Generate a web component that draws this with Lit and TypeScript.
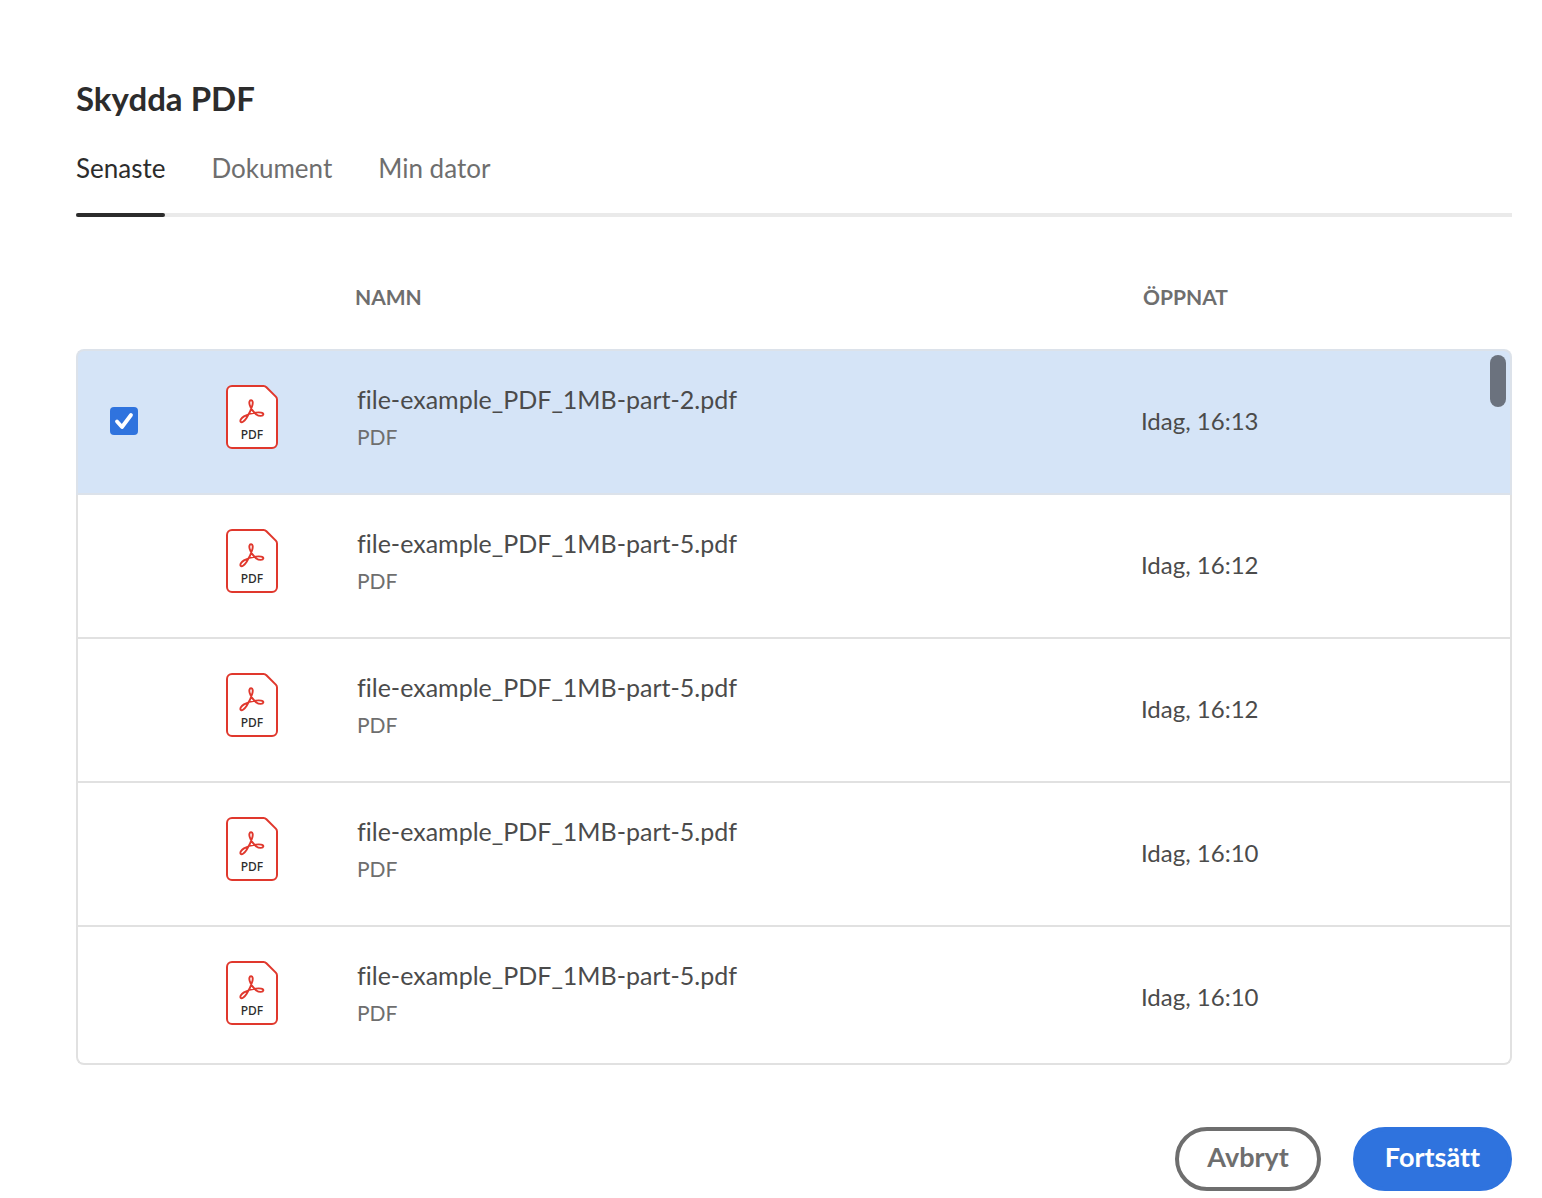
import { LitElement, html, css, svg } from "lit";
import { customElement, property, state } from "lit/decorators.js";
import { classMap } from "lit/directives/class-map.js";

interface RecentFile {
  name: string;
  opened: string;
}

const TABS = ["Senaste", "Dokument", "Min dator"];

const FILES: RecentFile[] = [
  { name: "file-example_PDF_1MB-part-2.pdf", opened: "Idag, 16:13" },
  { name: "file-example_PDF_1MB-part-5.pdf", opened: "Idag, 16:12" },
  { name: "file-example_PDF_1MB-part-5.pdf", opened: "Idag, 16:12" },
  { name: "file-example_PDF_1MB-part-5.pdf", opened: "Idag, 16:10" },
  { name: "file-example_PDF_1MB-part-5.pdf", opened: "Idag, 16:10" },
];

@customElement("pdf-icon")
class PdfIcon extends LitElement {
  static styles = css`
    :host {
      display: block;
      width: 52px;
      height: 64px;
    }
    svg {
      display: block;
    }
    .label {
      font: 500 12px "Noto Sans", sans-serif;
      fill: #2c2c2c;
    }
  `;

  render() {
    return html`<svg width="52" height="64" viewBox="0 0 52 64" aria-hidden="true">
      ${svg`
        <path d="M6 1H37.6a4 4 0 0 1 2.8 1.2L49.8 11.6a4 4 0 0 1 1.2 2.8V58a5 5 0 0 1-5 5H6a5 5 0 0 1-5-5V6a5 5 0 0 1 5-5Z"
          fill="#fff" stroke="#e0382d" stroke-width="2"/>
        <path d="M25.200 15.200C23.300 15 22.900 17.600 23.800 20.200C24.700 22.900 26.800 26.600 30.300 29.400C32.800 31.200 36.900 31.500 37.300 29.500C37.700 27.500 33.600 27.100 29.900 27.600C25.700 28.100 21 29.500 18 31.400C15.200 33.200 13.700 35.600 14.700 36.800C15.800 38.100 18.600 36.100 20.700 32.800C23 29.200 25.300 24.300 26.300 20.600C27 17.800 27 15.400 25.200 15.200Z"
          fill="none" stroke="#e0382d" stroke-width="1.9" stroke-linejoin="round"/>
        <text class="label" x="26" y="54" text-anchor="middle">PDF</text>
      `}
    </svg>`;
  }
}

@customElement("file-table")
class FileTable extends LitElement {
  @property({ attribute: false }) files: RecentFile[] = [];
  @state() private selected = 0;

  static styles = css`
    :host {
      display: block;
      position: relative;
      color: #4b4b4b;
    }
    table {
      width: 100%;
      table-layout: fixed;
      border-collapse: separate;
      border-spacing: 0;
    }
    .col-check {
      width: 150px;
    }
    .col-icon {
      width: 129px;
    }
    .col-date {
      width: 371px;
    }
    th {
      height: 132px;
      box-sizing: border-box;
      padding: 66px 0 0;
      text-align: left;
      vertical-align: top;
      font-size: 21px;
      line-height: 28px;
      font-weight: 700;
      color: #6e6e6e;
    }
    th.opened {
      padding-left: 2px;
    }
    td {
      height: 144px;
      box-sizing: border-box;
      padding: 34px 0 0;
      vertical-align: top;
      border-bottom: 2px solid #e1e1e1;
    }
    .first td {
      height: 146px;
      border-top: 2px solid #dfe3e8;
    }
    .last td {
      height: 138px;
    }
    td.check {
      padding: 56px 0 0 32px;
      border-left: 2px solid #e1e1e1;
    }
    td.name {
      padding: 32px 0 0 2px;
    }
    td.date {
      padding-top: 54px;
      border-right: 2px solid #e1e1e1;
      font-size: 24px;
      line-height: 32px;
    }
    .first .check {
      border-top-left-radius: 8px;
    }
    .first .date {
      border-top-right-radius: 8px;
    }
    .last .check {
      border-bottom-left-radius: 8px;
    }
    .last .date {
      border-bottom-right-radius: 8px;
    }
    .selected td {
      background: #d5e4f7;
      border-color: #dce2ea;
    }
    .file {
      display: flex;
      flex-direction: column;
      gap: 8px;
    }
    .file-name {
      font-size: 25px;
      line-height: 32px;
    }
    .file-type {
      font-size: 21px;
      line-height: 28px;
      color: #6e6e6e;
    }
    .box {
      display: grid;
      width: 28px;
      height: 28px;
    }
    .box > * {
      grid-area: 1 / 1;
    }
    input {
      appearance: none;
      width: 28px;
      height: 28px;
      margin: 0;
      border-radius: 4px;
      cursor: pointer;
    }
    input:checked {
      background: #2f73de;
    }
    .tick {
      visibility: hidden;
      pointer-events: none;
    }
    input:checked + .tick {
      visibility: visible;
    }
    .thumb {
      position: absolute;
      top: 138px;
      right: 6px;
      width: 16px;
      height: 52px;
      border-radius: 8px;
      background: #6b727e;
    }
  `;

  private toggle(i: number) {
    this.selected = this.selected === i ? -1 : i;
  }

  render() {
    const end = this.files.length - 1;
    return html`
      <table>
        <colgroup>
          <col class="col-check" />
          <col class="col-icon" />
          <col />
          <col class="col-date" />
        </colgroup>
        <thead>
          <tr>
            <th></th>
            <th></th>
            <th scope="col">NAMN</th>
            <th class="opened" scope="col">ÖPPNAT</th>
          </tr>
        </thead>
        <tbody>
          ${this.files.map(
            (f, i) => html`
              <tr class=${classMap({ first: i === 0, last: i === end, selected: i === this.selected })}>
                <td class="check">
                  <div class="box">
                    <input type="checkbox" id="pick-${i}" .checked=${i === this.selected}
                      @change=${() => this.toggle(i)} />
                    <svg class="tick" width="28" height="28" viewBox="0 0 28 28" aria-hidden="true">
                      <path d="M7 14.5L12 20L21 8" fill="none" stroke="#fff" stroke-width="3.8"
                        stroke-linecap="round" stroke-linejoin="round" />
                    </svg>
                  </div>
                </td>
                <td><pdf-icon></pdf-icon></td>
                <td class="name">
                  <div class="file">
                    <label class="file-name" for="pick-${i}">${f.name}</label>
                    <span class="file-type">PDF</span>
                  </div>
                </td>
                <td class="date">${f.opened}</td>
              </tr>
            `
          )}
        </tbody>
      </table>
      <div class="thumb"></div>
    `;
  }
}

@customElement("app-root")
class AppRoot extends LitElement {
  @state() private tab = 0;

  static styles = css`
    :host {
      display: block;
      min-height: 100vh;
      box-sizing: border-box;
      padding: 76px 30px 7px 76px;
      background: #fff;
      font-family: Lato, "Open Sans", sans-serif;
      font-variant-ligatures: none;
      color: #2c2c2c;
    }
    h1 {
      margin: 0;
      font-size: 33px;
      line-height: 44px;
      font-weight: 700;
    }
    .tabs {
      display: flex;
      gap: 46px;
      margin-top: 28px;
      box-shadow: inset 0 -4px #eaeaea;
    }
    button {
      font-family: inherit;
      font-variant-ligatures: inherit;
      cursor: pointer;
    }
    .tab {
      display: flex;
      flex-direction: column;
      gap: 25px;
      padding: 0;
      border: 0;
      background: none;
      color: #6e6e6e;
      font-size: 26px;
      line-height: 40px;
    }
    .tab::after {
      content: "";
      width: 100%;
      height: 4px;
      border-radius: 2px;
    }
    .tab.active {
      color: #2c2c2c;
    }
    .tab.active::after {
      background: #2c2c2c;
    }
    .actions {
      display: flex;
      justify-content: flex-end;
      gap: 32px;
      margin-top: 62px;
    }
    .action {
      padding: 10px 28px 14px;
      border: 4px solid #6e6e6e;
      border-radius: 32px;
      background: #fff;
      color: #6e6e6e;
      font-size: 27px;
      line-height: 32px;
      font-weight: 700;
    }
    .primary {
      border-color: #2f73de;
      background: #2f73de;
      color: #fff;
    }
  `;

  render() {
    return html`
      <h1>Skydda PDF</h1>
      <div class="tabs" role="tablist">
        ${TABS.map(
          (t, i) => html`<button type="button" role="tab" aria-selected=${i === this.tab ? "true" : "false"}
            class=${classMap({ tab: true, active: i === this.tab })} @click=${() => (this.tab = i)}>${t}</button>`
        )}
      </div>
      <file-table .files=${FILES}></file-table>
      <div class="actions">
        <button type="button" class="action">Avbryt</button>
        <button type="button" class="action primary">Fortsätt</button>
      </div>
    `;
  }
}
